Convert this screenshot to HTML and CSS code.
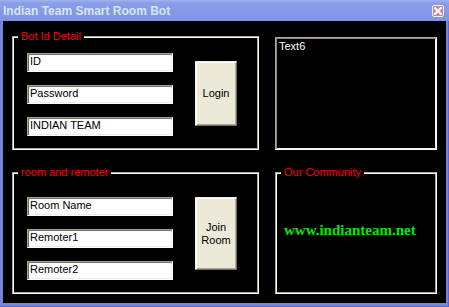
FILE: index.html
```html
<!DOCTYPE html>
<html>
<head>
<meta charset="utf-8">
<link rel="stylesheet" href="styles.css">
</head>
<body>
<div class="window">
  <div class="titlebar">
    <span class="title">Indian Team Smart Room Bot</span>
    <span class="close"><svg width="8" height="8" viewBox="0 0 8 8"><path d="M1 1 L7 7 M7 1 L1 7" stroke="#fff" stroke-width="2" stroke-linecap="square"/></svg></span>
  </div>
  <div class="client">
    <div class="grid">
      <section class="group g1">
        <span class="legend">Bot Id Detail</span>
        <div class="fields">
          <div class="input">ID</div>
          <div class="input">Password</div>
          <div class="input">INDIAN TEAM</div>
        </div>
        <div class="btn login">Login</div>
      </section>
      <div class="textbox">Text6</div>
      <section class="group g3">
        <span class="legend">room and remoter</span>
        <div class="fields">
          <div class="input">Room Name</div>
          <div class="input">Remoter1</div>
          <div class="input">Remoter2</div>
        </div>
        <div class="btn join">Join<br>Room</div>
      </section>
      <section class="group g4">
        <span class="legend">Our Community</span>
        <span class="link">www.indianteam.net</span>
      </section>
    </div>
  </div>
</div>
</body>
</html>
```
FILE: styles.css
```css
* { box-sizing: border-box; }
html, body { margin: 0; padding: 0; background: #7282dc; }
.window {
  width: 449px;
  height: 307px;
  background: #7585de;
  box-shadow: inset -1px -1px 0 #5865cf;
  display: flex;
  flex-direction: column;
  font-family: "Liberation Sans", Arial, sans-serif;
}
.titlebar {
  height: 21px;
  flex: none;
  display: flex;
  align-items: center;
  justify-content: space-between;
  padding: 0 5px 0 3px;
  background: linear-gradient(#a3b2ee 0, #8a9de8 3px, #7f94e4 100%);
}
.title {
  color: #d8e4f8;
  font-weight: bold;
  font-size: 12px;
  line-height: 14px;
  margin-top: 1px;
}
.close {
  width: 12px;
  height: 12px;
  margin-top: 1px;
  background: #c88a94;
  border: 1px solid #f4e8ec;
  border-radius: 2px;
  display: flex;
  align-items: center;
  justify-content: center;
}
.client {
  flex: 1;
  margin: 0 3px 4px 3px;
  background: #000;
}
.grid {
  display: grid;
  grid-template-columns: 247px 162px;
  grid-template-rows: 114px 122px;
  column-gap: 16px;
  row-gap: 22px;
  padding: 15px 0 0 9px;
}
.group {
  position: relative;
  border: 1px solid;
  border-color: #aca899 #ffffff #ffffff #aca899;
  box-shadow: inset 1px 1px 0 #ffffff, inset -1px -1px 0 #aca899;
  display: flex;
  align-items: flex-start;
  padding-left: 14px;
}
.legend {
  position: absolute;
  left: 5px;
  top: -7px;
  padding: 0 3px 0 3px;
  background: #000;
  color: #ff0000;
  font-size: 11px;
  line-height: 13px;
}
.g1 { padding-top: 16px; }
.g3 { padding-top: 24px; }
.fields {
  width: 146px;
  display: flex;
  flex-direction: column;
  gap: 13px;
}
.input {
  height: 19px;
  background: #fff;
  color: #000;
  font-size: 11px;
  line-height: 15px;
  padding-left: 2px;
  border: 1px solid;
  border-color: #aca899 #ffffff #ffffff #aca899;
  box-shadow: inset 1px 1px 0 #716f64, inset -1px -1px 0 #f1efe2;
}
.btn {
  width: 42px;
  margin-left: 22px;
  background: #ece9d8;
  color: #000;
  font-size: 11px;
  line-height: 13px;
  text-align: center;
  display: flex;
  align-items: center;
  justify-content: center;
  border: 1px solid;
  border-color: #f1efe2 #716f64 #716f64 #f1efe2;
  box-shadow: inset 1px 1px 0 #ffffff, inset -1px -1px 0 #aca899;
}
.login { height: 65px; margin-top: 8px; }
.join { height: 73px; margin-top: 0; }
.textbox {
  margin-top: 1px;
  height: 113px;
  color: #fff;
  font-size: 11px;
  line-height: 13px;
  padding: 2px 3px;
  border: 1px solid;
  border-color: #aca899 #ffffff #ffffff #aca899;
  box-shadow: inset 1px 1px 0 #8e8a7e, inset -1px -1px 0 #f1efe2;
}
.g4 {
  align-items: center;
  padding-left: 8px;
}
.link {
  font-family: "Liberation Serif", "Times New Roman", serif;
  font-weight: bold;
  font-size: 15px;
  line-height: 17px;
  color: #10e010;
  margin-top: -5px;
}
```
